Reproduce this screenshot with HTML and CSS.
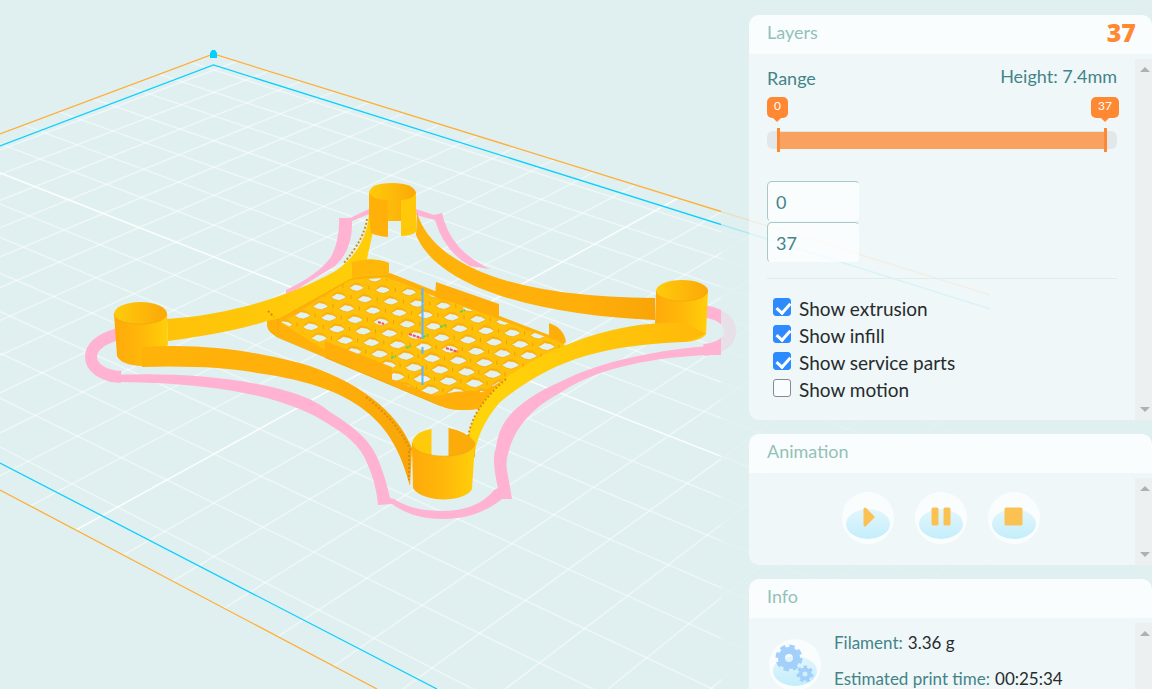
FILE: index.html
```
<!DOCTYPE html>
<html lang="en">
<head>
<meta charset="utf-8">
<title>Layer preview</title>
<link rel="stylesheet" href="styles.css">
</head>
<body>
<svg class="scene" width="1152" height="689" viewBox="0 0 1152 689" aria-label="Print bed with model">
  <defs>
    <clipPath id="solid"><rect width="721" height="689"/></clipPath>
    <clipPath id="ghost"><rect x="721" width="269" height="689"/></clipPath>
    <clipPath id="bed"><path d="M213 54 990 295V1013L0 490V134Z"/></clipPath>
    <clipPath id="floor"><path d="M281 322 350 280 385 278 430 295 560 342 564 346 530 364 505 379 483 392 449 393 437 397 391 379V368L325 345Z"/></clipPath>
    <linearGradient id="in"><stop offset="0" stop-color="#ffcb0a"/><stop offset="1" stop-color="#fba808"/></linearGradient>
    <linearGradient id="out"><stop offset="0" stop-color="#ffaa0a"/><stop offset=".5" stop-color="#ffb70a"/><stop offset="1" stop-color="#ffcf0a"/></linearGradient>
    <linearGradient id="back"><stop offset="0" stop-color="#ffc20a"/><stop offset="1" stop-color="#ffcf08"/></linearGradient>
    <linearGradient id="front"><stop offset="0" stop-color="#ffb30a"/><stop offset=".7" stop-color="#ffae0a"/><stop offset="1" stop-color="#f9a509"/></linearGradient>
    <linearGradient id="fright"><stop offset="0" stop-color="#ffd60a"/><stop offset="1" stop-color="#ffb80a"/></linearGradient>
    <g id="plane">
      <g id="grid" class="grid" clip-path="url(#bed)"></g>
      <path class="edge-orange" d="M0 134 213.500 54 990 295M0 490 377 689"/>
      <path class="edge-cyan" d="M0 146 213.500 65 990 309M0 463 437 689"/>
      <path class="skirt" d="M704 311Q730 316 730 331Q730 347 704 350"/>
    </g>
  </defs>
  <use href="#plane" clip-path="url(#solid)"/>
  <use href="#plane" clip-path="url(#ghost)" class="ghost"/>
  <path d="M210 58V53L212 50H215L217 53V58Z" fill="#00d0ff"/>
  <g clip-path="url(#solid)">
    <path class="skirt" d="M118 334C98 340 91 348 91 357C91 367 102 376 121 377"/>
    <path class="brim" d="M110 382V375C175 372 240 377 290 392C310 398 322 405 330 412C346 422 368 436 377 457Q384 472 390 498L394 499C408 508 424 511 443 511C466 511 484 503 494 490L498 488Q491 458 496 448C499 424 510 412 530 398Q545 388 560 382C600 361 660 349 721 345V355H707C640 358 590 372 560 393C535 406 517 425 510 447Q505 462 507 470L512 499H502C486 512 466 519 443 519C420 519 405 513 392 504L378 505Q376 482 367 463C360 445 345 434 330 425C290 398 220 382 110 382Z"/>
    <path class="brim" d="M339 218H350L369 209V214L352 221Q353 250 335 266L286 296V290Q318 275 331 257Q340 240 339 218ZM416 209 434 215 442 213Q446 232 459 247Q471 260 490 269L470 266Q444 251 435 220L416 215Z"/>

    <path fill="url(#front)" d="M417 212C425 242 466 297 655 298V320C555 316 440 293 416 235Z"/>
    <path fill="#ffb10a" d="M267 309 281 315 352 275 390 273 435 291 549 335 566 342 500 402 477 409Q454 412 441 406L277 337Q268 332 267 326Z"/>
    <path fill="#ffc00a" d="M281 323 350 280 385 277 560 342 566 346 530 364 505 379 483 391 449 393 437 397 391 377 325 350Z"/>
    <g id="holes" clip-path="url(#floor)"></g>
    <path fill="#ffae0a" d="M325 341 392 367V380L437 397Q450 390 480 391L477 409Q454 412 441 406L325 358Z"/>
    <path fill="#ffad09" d="M436 282 499 304V317L435 297ZM549 323Q564 328 566 342L549 337Z"/>
    <path fill="url(#back)" d="M167 319C228 315 290 297 337 270Q366 249 369 214L376 220Q371 240 367 259Q380 259 389 263V276Q360 275 349 280L281 318 267 321Q230 333 168 341Z"/>
    <path fill="#ffb80a" d="M352 262Q374 257 389 263V276Q367 274 352 278Z"/>
    <path class="seam" d="M367 219Q364 240 343 264M268 311 274 317"/>
    <path class="rim" d="M281 318 349 280Q360 275 389 276M268 329 277 337 441 406M278 318V334"/>
    <path stroke="#5eb4fa" stroke-width="2" d="M422.500 288V339M422.500 347V354M422.500 366V385"/>
    <path class="mark" d="m378 322 6 2m25 10 12 4m25 10 12 4"/>
    <path class="mark green" d="m423 337 5-2m12-8 6-2m-40 23 5-2m-20 12 5-2m64-44 5-2"/>

    <path fill="url(#in)" d="M369 193Q370 183 392 183T416 193L413 221H371Z"/>
    <path fill="#ffb10a" d="M369 193Q373 200 388 200V237Q377 236 371 233L369 216Z"/>
    <path fill="#ffc909" d="M416 193Q412 200 401 200V236Q411 236 416 232Z"/>

    <ellipse cx="682" cy="291" rx="26" ry="11" fill="url(#in)"/>
    <path fill="url(#out)" d="M656 291C658 304 705 305 708 291L706 334Q701 341 683 342L655 325Z"/>

    <ellipse cx="140.500" cy="314" rx="26.500" ry="12" fill="url(#in)"/>
    <path fill="url(#out)" d="M114 314C115 327 164 328 167 314L168 345 142 366Q121 365 117 356Z"/>
    <path fill="url(#front)" d="M142 347C205 343 252 351 300 363C357 380 397 411 412 448L410 486C395 429 367 388 257 373Q213 365 142 367Z"/>

    <path fill="url(#fright)" d="M685 323C623 320 560 341 507 377Q475 403 467 440L474 460Q476 430 500 402C555 358 602 346 683 342L706 334Z"/>
    <path class="seam" d="M506 379Q470 410 468 440M366 397Q397 421 411 451M409 451V480"/>
    <path fill="#ffca09" d="M412 443Q415 431 431.500 429V457H412Z"/>
    <path fill="#fbac0a" d="M448.500 428Q466 431 475 442V457H448.500Z"/>
    <path fill="url(#out)" d="M412 443C414 460 473 461 475 443L472 489C465 503 422 503 413 488Z"/>
    <path class="rim" d="M412 443C414 460 473 461 475 443M114 314C115 327 164 328 167 314M656 291C658 304 705 305 708 291"/>
  </g>
</svg>

<aside class="sidebar">
  <section class="panel">
    <header class="panel-head"><h2>Layers</h2><output class="count">37</output></header>
    <div class="panel-main">
      <div class="content">
        <div class="range-head"><span>Range</span><span class="height">Height: 7.4mm</span></div>
        <div class="tips"><span class="tip">0</span><span class="tip">37</span></div>
        <div class="slider"><span class="fill"></span></div>
        <div class="fields">
          <input type="text" value="0" aria-label="First layer">
          <input type="text" value="37" aria-label="Last layer">
        </div>
        <div class="checks">
          <label><input type="checkbox" checked>Show extrusion</label>
          <label><input type="checkbox" checked>Show infill</label>
          <label><input type="checkbox" checked>Show service parts</label>
          <label><input type="checkbox">Show motion</label>
        </div>
      </div>
      <div class="scroll"><i class="up"></i><i class="down"></i></div>
    </div>
  </section>

  <section class="panel">
    <header class="panel-head"><h2>Animation</h2></header>
    <div class="panel-main">
      <div class="content player">
        <button type="button" aria-label="Play"><svg width="52" height="52" viewBox="0 0 52 52"><use href="#disc"/><path class="glyph" d="M23 17 31 25 23 33Z"/></svg></button>
        <button type="button" aria-label="Pause"><svg width="52" height="52" viewBox="0 0 52 52"><use href="#disc"/><path class="glyph" d="M18 17h4v15h-4zM30 17h4v15h-4z"/></svg></button>
        <button type="button" aria-label="Stop"><svg width="52" height="52" viewBox="0 0 52 52"><use href="#disc"/><path class="glyph" d="M18 17h15v15H18z"/></svg></button>
      </div>
      <div class="scroll"><i class="up"></i><i class="down"></i></div>
    </div>
  </section>

  <section class="panel">
    <header class="panel-head"><h2>Info</h2></header>
    <div class="panel-main">
      <div class="content info">
        <svg width="52" height="52" viewBox="0 0 52 52">
          <defs>
            <linearGradient id="water" x2="0" y2="1"><stop offset="0" stop-color="#e4f6fb"/><stop offset="1" stop-color="#c2eefb"/></linearGradient>
            <g id="disc"><circle cx="26" cy="26" r="26" fill="#fafdfe"/><ellipse cx="26" cy="32" rx="22" ry="15" fill="url(#water)"/></g>
          </defs>
          <use href="#disc"/>
          <g fill="none" stroke="#a3cffb">
            <circle cx="20" cy="19" r="7.500" stroke-width="7"/><circle cx="20" cy="19" r="12" stroke-width="3" stroke-linejoin="round" stroke-dasharray="5.420 4"/>
            <circle cx="36" cy="35" r="4.500" stroke-width="4"/><circle cx="36" cy="35" r="7" stroke-width="3" stroke-dasharray="3.280 3"/>
          </g>
        </svg>
        <dl>
          <div><dt>Filament:</dt><dd>3.36 g</dd></div>
          <div><dt>Estimated print time:</dt><dd>00:25:34</dd></div>
        </dl>
      </div>
      <div class="scroll"><i class="up"></i></div>
    </div>
  </section>
</aside>
<script src="scene.js"></script>
</body>
</html>
```
FILE: styles.css
```
* { box-sizing: border-box; }
body {
  margin: 0;
  height: 100vh;
  overflow: hidden;
  background: #e0f0f0;
  font: 18px/24px Lato, "Open Sans", sans-serif;
  color: #272b2e;
  display: flex;
  justify-content: flex-end;
}
.scene { position: absolute; left: 0; top: 0; z-index: -1; }
.ghost { opacity: .24; }
.grid line { stroke: #fff; stroke-opacity: .48; stroke-width: 1.500; }
.grid .axis { stroke-opacity: .9; }
.edge-orange, .edge-cyan { fill: none; stroke-width: 1.300; }
.edge-orange { stroke: #ffae35; }
.edge-cyan { stroke: #0ccfff; }
.skirt { fill: none; stroke: #ffb2d2; stroke-width: 12; }
.brim { fill: #ffb2d2; }
.rim { fill: none; stroke: #eea50a; stroke-opacity: .6; }
.seam { fill: none; stroke: #d98f0a; stroke-width: 2; stroke-dasharray: 2 2; }
.mark { stroke: #f0506a; stroke-width: 2; stroke-dasharray: 3 1; }
.green { stroke: #62cf5a; }
.hole { fill: #e3f2ec; stroke: #f5a60a; stroke-width: .7; }
.node { fill: #e9a00a; }
.wall { fill: #fdaf0a; }

.sidebar {
  width: 403px;
  padding-top: 15px;
  display: flex;
  flex-direction: column;
  gap: 14px;
}
.panel { flex: none; border-radius: 10px 10px 0 10px; overflow: hidden; }
.panel-head {
  display: flex;
  justify-content: space-between;
  align-items: center;
  height: 39px;
  padding: 0 16px 5px 18px;
  background: rgba(255, 255, 255, .84);
}
h2 { margin: 0; font: inherit; color: #93c1b9; }
.count { font: 800 25px/32px "Open Sans", sans-serif; color: #ff8933; }
.panel-main { display: flex; background: rgba(254, 254, 255, .5); }
.content { flex: 1; padding: 12px 18px 18px; }
.scroll {
  width: 17px;
  margin-top: 5px;
  padding: 8px 2px 8px 5px;
  background: #ecf0f0;
  display: flex;
  flex-direction: column;
  justify-content: space-between;
}
.up, .down { border: 5px solid transparent; border-top-width: 0; border-bottom-color: #acb1b1; }
.down { border-width: 5px 5px 0; border-color: #acb1b1 transparent transparent; }

.range-head { display: flex; justify-content: space-between; color: #438488; padding-bottom: 7px; }
.height { margin-top: -2px; }
.tips { display: flex; justify-content: space-between; margin-right: -2px; }
.tip {
  position: relative;
  padding: 0 7px;
  height: 21px;
  border-radius: 5px;
  background: #ff8933;
  color: #fff;
  font-size: 12px;
  line-height: 18px;
}
.tip::after {
  content: "";
  position: absolute;
  left: calc(50% - 5px);
  top: 20px;
  border: 5px solid transparent;
  border-top-color: #ff8933;
}
.slider { height: 18px; margin-top: 16px; padding: 0 10px; border-radius: 6px; background: #e2e7ea; }
.fill {
  display: block;
  height: 24px;
  margin-top: -3px;
  border: solid #ff8933;
  border-width: 0 3px;
  position: relative;
  top: -3px;
  background: linear-gradient(#f9a15e, #f9a15e) center / 100% 17px no-repeat;
}
.fields { display: grid; width: 93px; margin-top: 32px; }
.fields input {
  min-width: 0;
  height: 41px;
  padding: 0 8px;
  border: 1px solid #a9c8c9;
  border-right-color: transparent;
  border-bottom-color: transparent;
  border-radius: 5px;
  background: rgba(255, 255, 255, .68);
  background-clip: padding-box;
  font: inherit;
  color: #438488;
}
.checks {
  display: grid;
  gap: 3px;
  margin-top: 15px;
  padding: 18px 6px 0;
  border-top: 1px solid #dfeeed;
  font-size: 19px;
}
.checks label { display: flex; align-items: center; gap: 8px; }
.checks input {
  appearance: none;
  width: 18px;
  height: 18px;
  margin: 0 0 4px;
  border: 1px solid #858a8d;
  border-radius: 3px;
  background: #fafdfe;
}
.checks input:checked { background: #2e8bff; border-color: #2e8bff; position: relative; }
.checks input:checked::after {
  content: "";
  position: absolute;
  left: 5px;
  top: 1px;
  width: 6px;
  height: 11px;
  border: solid #fff;
  border-width: 0 3px 3px 0;
  transform: rotate(42deg);
}
.player { display: flex; justify-content: center; gap: 21px; padding: 19px 19px 21px 17px; }
.player button { padding: 0; border: 0; background: none; width: 52px; height: 52px; }
.glyph { fill: #fbc253; stroke: #fbc253; stroke-width: 3; stroke-linejoin: round; }
.info { display: flex; gap: 13px; padding-left: 20px; padding-top: 13px; font-size: 17px; }
.info > svg { margin-top: 8px; }
dl { margin: 0; display: grid; gap: 11px; }
dl div { display: flex; gap: 5px; }
dt { color: #438488; }
dd { margin: 0; }
```
FILE: scene.js
```
const NS = "http://www.w3.org/2000/svg";
function add(parent, name, attrs) {
  const el = document.createElementNS(NS, name);
  for (const k in attrs) el.setAttribute(k, attrs[k]);
  parent.appendChild(el);
}
// Perspective projection of bed cell (i, j) onto the viewport.
function project(i, j) {
  const a = 0.0124 * i, b = 0.01445 * j, w = 1 - a - b;
  return [(214 + 2310 * a - 2380 * b) / w, (70 + 735 * a + 740 * b) / w];
}
const grid = document.getElementById("grid");
function rule(p, q, bold) {
  add(grid, "line", { x1: p[0], y1: p[1], x2: q[0], y2: q[1], class: bold ? "axis" : "cell" });
}
for (let i = 0; i <= 26; i++) rule(project(i, -1), project(i, 17), i === 12);
for (let j = 0; j <= 15; j++) rule(project(-1, j), project(27, j), j === 7);

// Honeycomb openings in the model floor.
const holes = document.getElementById("holes");
function outline(shape, x, y, s) {
  return shape.map(p => (x + p[0] * s) + "," + (y + p[1] * s)).join(" ");
}
const opening = [[-9, 0], [-5, -2], [-2, -4], [4, -3], [9, 0], [6, 2], [1, 4], [-4, 3]];
const side = [[-9, 0], [-5, -4], [-2, -6], [4, -5], [9, -1], [4, -3], [-2, -4]];
for (let m = -3; m < 14; m++) {
  for (let k = -6; k < 15; k++) {
    const x = 382.700 + 26.200 * k - 18 * m, y = 290 + 2.200 * k + 9.200 * m;
    const s = 0.85 + (y - 280) / 500;
    add(holes, "polygon", { class: "wall", points: outline(side, x, y, s) });
    add(holes, "polygon", { class: "hole", points: outline(opening, x, y, s) });
    add(holes, "rect", { class: "node", x: x + 12, y: y - 2, width: 1, height: 4 });
  }
}
```
